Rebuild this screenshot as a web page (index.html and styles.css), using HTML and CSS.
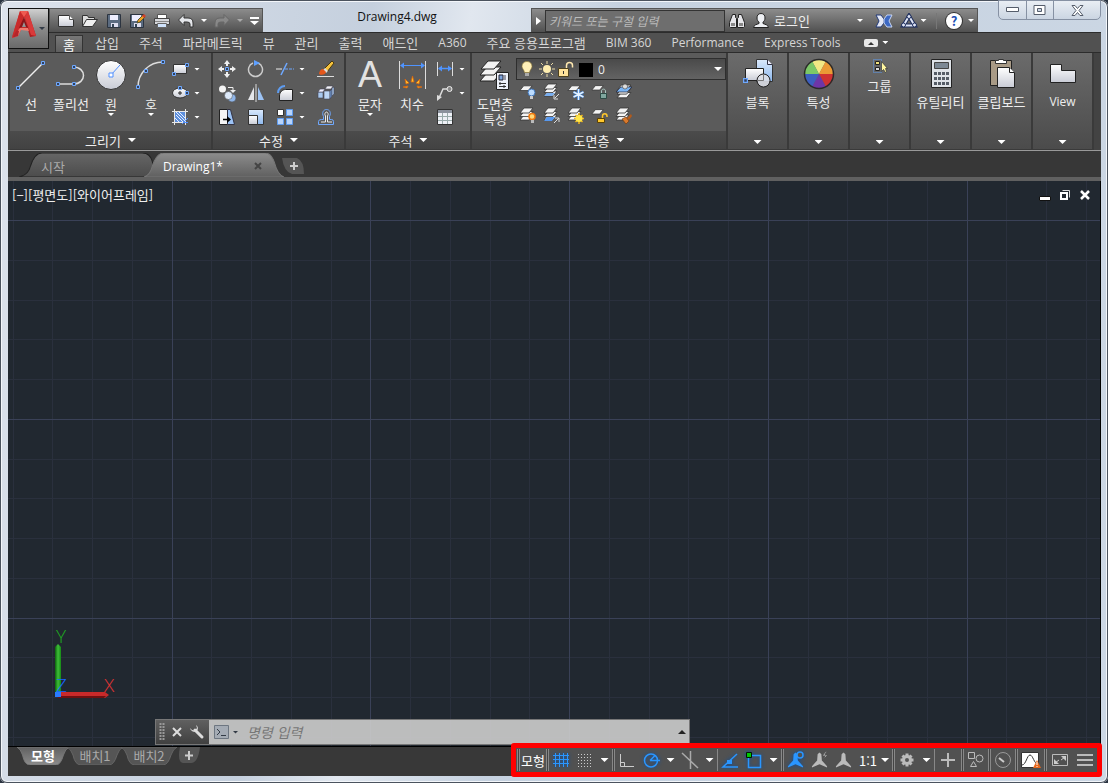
FILE: index.html
```html
<!DOCTYPE html>
<html lang="ko">
<head>
  <meta charset="UTF-8">
  <meta name="viewport" content="width=device-width, initial-scale=1">
  <title>Drawing4.dwg</title>
  <link rel="stylesheet" href="styles.css">
</head>
<body>

<!-- Shared gradients and symbols -->
<svg class="sprite" width="0" height="0" aria-hidden="true">
  <defs>
    <linearGradient id="gWhite" x1="0" y1="0" x2="0" y2="1"><stop offset="0" stop-color="#fff"/><stop offset="1" stop-color="#c9ccd6"/></linearGradient>
    <linearGradient id="gBlue" x1="0" y1="0" x2="0" y2="1"><stop offset="0" stop-color="#dbe9fb"/><stop offset="1" stop-color="#8db8ee"/></linearGradient>
    <linearGradient id="gRed" x1="0" y1="0" x2="1" y2="1"><stop offset="0" stop-color="#e8433b"/><stop offset="1" stop-color="#a3151a"/></linearGradient>
    <linearGradient id="gTab" x1="0" y1="0" x2="0" y2="1"><stop offset="0" stop-color="#666"/><stop offset="1" stop-color="#4c4c4c"/></linearGradient>
    <linearGradient id="gTabOn" x1="0" y1="0" x2="0" y2="1"><stop offset="0" stop-color="#8c8c8c"/><stop offset="1" stop-color="#606060"/></linearGradient>
    <linearGradient id="gLayOn" x1="0" y1="0" x2="0" y2="1"><stop offset="0" stop-color="#606060"/><stop offset="1" stop-color="#8c8c8c"/></linearGradient>
    <linearGradient id="gGreen" x1="0" y1="0" x2="1" y2="0"><stop offset="0" stop-color="#0a640a"/><stop offset=".5" stop-color="#3fbe3a"/><stop offset="1" stop-color="#158a15"/></linearGradient>
  </defs>
  <symbol id="stack" viewBox="0 0 16 16">
    <g fill="#f4f4f4" stroke="#333" stroke-width=".8"><path d="M5 8h9l-4 5H1z"/><path d="M5 4.500h9l-4 5H1z"/><path d="M5 1h9l-4 5H1z"/></g>
  </symbol>
  <symbol id="sheet" viewBox="0 0 16 16"><path d="M5 3h9l-4 5H1z" fill="#f4f4f4" stroke="#333" stroke-width=".8"/></symbol>
  <symbol id="anno" viewBox="0 0 18 18"><path d="M9 1 L11 3 L11.500 9.500 L17 15.500 V17 L9 13.500 L1 17 V15.500 L6.500 9.500 L7 3Z"/></symbol>
  <symbol id="node" viewBox="0 0 4 4"><path d="M.5.5h3v3h-3z" fill="#33415a" stroke="#6ea8ff"/></symbol>
</svg>

<div class="window">

  <!-- Title bar -->
  <header class="titlebar">
    <button class="app-menu" aria-label="Application menu">
      <svg width="25" height="28" viewBox="0 0 25 28">
        <path fill-rule="evenodd" d="M8 0h8l8 25-6 1-2-7H9l-3 6-6 2zM12 6l-3 10h6z" fill="url(#gRed)"/>
        <path d="M8 0l4 6-3 10-9 10z" fill="#c92b2b"/>
        <path d="M12 6l-5 11 3-1 2-5 2 5 2 1z" fill="#8a1519"/>
        <path d="M0 27l8-10h8l1 3-8-1-3 6z" fill="#ee7a6e"/>
        <path d="M0 27l5-8 2 1-1 5z" fill="#b5242a"/>
        <path d="M16 0l8 25-5-1-4-12-2-6z" fill="#d93a3a"/>
        <path d="M8 0h8l-4 6z" fill="#ef5b52"/>
      </svg>
      <i class="caret dark"></i>
    </button>

    <div class="quick">
      <button aria-label="새로 만들기"><svg width="18" height="16"><path d="M1.500 2.500h11l4 4v7h-15z" fill="url(#gWhite)" stroke="#333"/><path d="M12.500 2.500v4h4" fill="#fff" stroke="#555"/></svg></button>
      <button aria-label="열기"><svg width="18" height="16"><path d="M1.500 13.500v-11h5l1 2h6v3" fill="#ddd" stroke="#333"/><path d="M1.500 13.500l4-7h11l-5 7z" fill="#efefef" stroke="#333"/></svg></button>
      <button aria-label="저장"><svg width="18" height="16"><path d="M2.500 1.500h13v13h-13z" fill="#5b6b80" stroke="#2c3440"/><path d="M5 2h8v5H5z" fill="#eef"/><path d="M6 10h7v4H6z" fill="#dde"/><path d="M7 11h2v3H7z" fill="#345"/></svg></button>
      <button aria-label="다른 이름으로 저장"><svg width="18" height="16"><path d="M1.500 1.500h13v13h-13z" fill="#5b6b80" stroke="#2c3440"/><path d="M3 2h9v6H3z" fill="#eef"/><path d="M5 10h7v4H5z" fill="#dde"/><path d="M6 11h2v3H6z" fill="#345"/><path d="M8 10l1-3 5-5 2 2-5 5z" fill="#f0a020" stroke="#553"/><path d="M13 3l2-2 2 2-2 2z" fill="#d0402a"/></svg></button>
      <button aria-label="플롯"><svg width="18" height="16"><path d="M4.500 1.500h9v5h-9z" fill="#fff" stroke="#555"/><path d="M1.500 5.500h15v6h-15z" fill="#d6d8dc" stroke="#444"/><path d="M2 8h14v1H2z" fill="#888"/><path d="M4.500 10.500h9v4h-9z" fill="#cfe2fb" stroke="#666"/></svg></button>
      <button aria-label="명령 취소"><svg width="18" height="16"><path d="M1.500 7L7 1.500v3.500h4q5 0 5 5v4h-3v-3q0-2-3-2H7v3.500z" fill="#e4e6ea" stroke="#333"/></svg></button>
      <i class="caret"></i>
      <button aria-label="명령 복구"><svg width="18" height="16"><path d="M16.500 7L11 1.500v3.500H7q-5 0-5 5v4h3v-3q0-2 3-2h3v3.500z" fill="#888" stroke="#666"/></svg></button>
      <i class="caret dim"></i>
      <button class="narrow" aria-label="사용자화"><svg width="9" height="10"><path d="M0 1h9v2H0zM0 5h9L4.500 9z" fill="#fff"/></svg></button>
    </div>

    <div class="doc-title latin">Drawing4.dwg</div>

    <div class="info">
      <button class="info-toggle" aria-label="검색 접기"><svg width="5" height="8"><path d="M0 0l5 4-5 4z" fill="#fff"/></svg></button>
      <input class="search" type="text" aria-label="검색" placeholder="키워드 또는 구절 입력">
      <button aria-label="찾기"><svg width="18" height="18"><g fill="#e6e6ea" stroke="#222"><path d="M4.500 2.500h3v3l1 1v9h-6l-1-1v-4z"/><path d="M10.500 2.500h3l3 8v4l-1 1h-6v-9l1-1z"/></g><path d="M3 11h4v3H3zM11 11h4v3h-4z" fill="#888"/></svg></button>
      <button class="login"><svg width="18" height="18"><path d="M9 1.500c3 0 4 2 4 4.500 0 2-1 3.500-2 4v1.500c2 1 5 1 5.500 4h-15C2 12.500 5 12.500 7 11.500V10C6 9.500 5 8 5 6c0-2.500 1-4.500 4-4.500z" fill="#eef0f4" stroke="#222"/></svg><span>로그인</span><i class="caret"></i></button>
      <button aria-label="Exchange"><svg width="18" height="16"><path d="M1 2h5l3 4v4l-3 4H1l3-6z" fill="#e4e8f4" stroke="#223a7a"/><path d="M17 2h-5L9 6v4l3 4h5l-3-6z" fill="#3d69c4" stroke="#c8d6f4"/></svg></button>
      <button class="a360" aria-label="A360"><svg width="18" height="16"><path d="M9 3L3.500 12.500h11z" fill="none" stroke="#1d2d5c" stroke-width="4"/><path d="M9 3L3.500 12.500h11z" fill="none" stroke="#dfe5f5" stroke-width="2"/><g fill="#dfe5f5" stroke="#1d2d5c"><circle cx="9" cy="3.500" r="2"/><circle cx="3.500" cy="12" r="2"/><circle cx="14.500" cy="12" r="2"/></g></svg><i class="caret"></i></button>
      <i class="info-sep"></i>
      <button class="help" aria-label="도움말"><span>?</span><i class="caret"></i></button>
    </div>

    <div class="win-buttons">
      <button aria-label="최소화"><svg width="13" height="6"><path d="M.5.500h12v4H.5z" fill="#fff" stroke="#555d6b"/></svg></button>
      <button aria-label="최대화"><svg width="13" height="10"><path d="M1 .500h11v9H1z" fill="#fff" stroke="#555d6b"/><path d="M4.500 3.500h4v3h-4z" fill="#ccd6e4" stroke="#555d6b"/></svg></button>
      <button class="close" aria-label="닫기"><svg width="13" height="11"><path d="M1 .500h3l2.500 3 2.500-3h3l-4 5 4 5H9l-2.500-3-2.500 3H1l4-5z" fill="#fff" stroke="#555d6b"/></svg></button>
    </div>
  </header>

  <!-- Ribbon tabs -->
  <nav class="ribbon-tabs">
    <button class="active">홈</button>
    <button>삽입</button>
    <button>주석</button>
    <button>파라메트릭</button>
    <button>뷰</button>
    <button>관리</button>
    <button>출력</button>
    <button>애드인</button>
    <button class="latin">A360</button>
    <button>주요 응용프로그램</button>
    <button class="latin">BIM 360</button>
    <button class="latin">Performance</button>
    <button class="latin">Express Tools</button>
    <button class="ribbon-min" aria-label="리본 최소화"><svg width="14" height="8"><rect width="14" height="8" rx="2" fill="#e8e8e8"/><path d="M4 6l3-3 3 3z" fill="#333"/></svg><i class="caret"></i></button>
  </nav>

  <!-- Ribbon panels -->
  <section class="ribbon">
    <div class="panel">
      <div class="panel-body draw">
        <button class="tool">
          <svg width="32" height="32"><path d="M4 28L28 4" stroke="#eee" stroke-width="1.500"/><use href="#node" x="1" y="27" width="4" height="4"/><use href="#node" x="26" y="2" width="4" height="4"/></svg>
          <span>선</span>
        </button>
        <button class="tool">
          <svg width="32" height="32"><path d="M4 25h14c14 0 14-17 0-17" fill="none" stroke="#ddd" stroke-width="1.500"/><use href="#node" x="1" y="23" width="4" height="4"/><use href="#node" x="17" y="23" width="4" height="4"/><use href="#node" x="17" y="6" width="4" height="4"/></svg>
          <span>폴리선</span>
        </button>
        <button class="tool">
          <svg width="32" height="32"><circle cx="16" cy="16" r="14.500" fill="url(#gWhite)" stroke="#333"/><path d="M16 16L25 6" stroke="#4f8fff"/><path d="M14 14h4v4h-4z" fill="#fff" stroke="#4f8fff"/></svg>
          <span>원</span><i class="caret"></i>
        </button>
        <button class="tool">
          <svg width="32" height="32"><path d="M3 28C3 14 14 3 28 3" fill="none" stroke="#ddd" stroke-width="1.500"/><use href="#node" x="1" y="26" width="4" height="4"/><use href="#node" x="9" y="10" width="4" height="4"/><use href="#node" x="26" y="1" width="4" height="4"/></svg>
          <span>호</span><i class="caret"></i>
        </button>
        <div class="small-tools one">
          <button aria-label="직사각형"><svg width="18" height="18"><path d="M2.500 4.500h13v9h-13z" fill="url(#gWhite)" stroke="#333"/><use href="#node" x="1" y="12" width="4" height="4"/><use href="#node" x="14" y="3" width="4" height="4"/></svg><i class="caret"></i></button>
          <button aria-label="타원"><svg width="18" height="18"><ellipse cx="9" cy="9" rx="7.500" ry="5" fill="url(#gWhite)" stroke="#333"/><path d="M7 9h4M9 7v4" stroke="#222"/><use href="#node" x="7" y="2" width="4" height="4"/><use href="#node" x="14" y="7" width="4" height="4"/></svg><i class="caret"></i></button>
          <button aria-label="해치"><svg width="18" height="18"><path d="M4 4h10v10H4z" fill="#5d8fdd"/><path d="M5 7l7 7M5 4l9 9M8 4l6 6M4 10l4 4" stroke="#e6efff"/><path d="M1 3.500h16M1 14.500h16M3.500 1v16M14.500 1v16" stroke="#e8e8e8"/><path d="M11 16l6-6M12 14.500h5" stroke="#4f8fff"/></svg><i class="caret"></i></button>
        </div>
      </div>
      <button class="panel-title">그리기<i class="caret big"></i></button>
    </div>

    <div class="panel">
      <div class="panel-body">
        <div class="small-tools four">
          <button aria-label="이동"><svg width="18" height="18"><path d="M9 0l3 4h-2v2H8V4H6zM9 18l3-4h-2v-2H8v2H6zM0 9l4-3v2h2v2H4v2zM18 9l-4-3v2h-2v2h2v2z" fill="#f0f0f0"/><use href="#node" x="7" y="7" width="4" height="4"/></svg></button>
          <button aria-label="회전"><svg width="18" height="18"><path d="M11 3a7 7 0 1 1-5 0" fill="none" stroke="#ccc" stroke-width="1.500"/><path d="M7 0l6 3-6 3z" fill="#5ea0ff"/></svg></button>
          <button aria-label="자르기"><svg width="18" height="18"><path d="M0 9h6" stroke="#eee"/><path d="M5 15l6-12" stroke="#6ea8ff" stroke-width="1.500"/><path d="M9 9h9" stroke="#6ea8ff" stroke-dasharray="3 1"/></svg><i class="caret"></i></button>
          <button aria-label="지우기"><svg width="18" height="18"><path d="M7 9l8-8 2 2-7 9z" fill="#f6c23c" stroke="#4a3a10"/><path d="M6 10l2-2 3 3-2 2z" fill="#ddd"/><path d="M2 14c0-3 2-5 4-5l3 3c0 2-4 4-7 2z" fill="#e4571b"/><path d="M0 16.500h17" stroke="#ddd"/></svg></button>

          <button aria-label="복사"><svg width="18" height="18"><circle cx="4.500" cy="5" r="3.500" fill="#f4f4f4"/><circle cx="14" cy="14" r="4" fill="#8fb5e8" stroke="#444" stroke-width=".5"/><circle cx="10.500" cy="11.500" r="4" fill="#dce8f8" stroke="#444" stroke-width=".5"/><path d="M10 3.500h5v3" fill="none" stroke="#eee"/><path d="M12 6h6l-3 3z" fill="#eee"/></svg></button>
          <button aria-label="대칭"><svg width="18" height="18"><path d="M7 3v13H1z" fill="#e4e6ea"/><path d="M11 3v13h6z" fill="#9cc3f5"/><path d="M9 0v18" stroke="#ddd"/></svg></button>
          <button aria-label="모깎기"><svg width="18" height="18"><path d="M3.500 16.500V12c0-4 3-6.500 6-6.500h7v11z" fill="url(#gWhite)" stroke="#222"/><path d="M2 9c0-4 3-7 7-7" fill="none" stroke="#5e9cf0" stroke-width="2"/></svg><i class="caret"></i></button>
          <button aria-label="분해"><svg width="18" height="18"><g stroke="#445" stroke-width=".6"><path d="M1 8h5v6H1z" fill="#a8c8ee"/><path d="M1 8l2-3h5L6 8z" fill="#eef"/><path d="M7 7h6v8H7z" fill="#bdd6f5"/><path d="M13 7l2-2v7l-2 3z" fill="#6f9bd6"/><path d="M8 5l2-3h6l-2 3z" fill="#f4f4f8"/><path d="M15 4l2-1v7l-2 2z" fill="#a8c8ee"/></g></svg></button>

          <button aria-label="신축"><svg width="18" height="18"><path d="M1.500 1.500h8v15h-8z" fill="#f4f4f4" stroke="#222"/><path d="M9.500 1.500h3l4 15h-7z" fill="#9cc3f5" stroke="#334"/><path d="M5 11.500h6" stroke="#000" stroke-width="1.500"/><path d="M9 8l4 3.500L9 15z"/></svg></button>
          <button aria-label="축척"><svg width="18" height="18"><path d="M1.500 1.500h15v15h-15z" fill="url(#gBlue)" stroke="#333"/><path d="M1.500 7.500h9v9h-9z" fill="url(#gWhite)" stroke="#333"/></svg></button>
          <button aria-label="배열"><svg width="18" height="18"><path d="M1.500 1.500h6v6h-6z" fill="#fff" stroke="#333"/><g fill="#b9d4fa" stroke="#5e9cf0"><path d="M10.500 1.500h6v6h-6zM1.500 10.500h6v6h-6zM10.500 10.500h6v6h-6z"/></g></svg><i class="caret"></i></button>
          <button aria-label="간격띄우기"><svg width="18" height="18"><path d="M1.500 16.500v-3q0-2 3-2h2v-3c-2-4 0-7 3-7s5 3 3 7v3h2q2 0 2 2v3z" fill="none" stroke="#6ea8ff"/><path d="M4 14h4.500v-6c-1.500-2 0-4 1-4s2.500 2 1 4v6H15" fill="none" stroke="#e8e8e8"/></svg></button>
        </div>
      </div>
      <button class="panel-title">수정<i class="caret big"></i></button>
    </div>

    <div class="panel">
      <div class="panel-body note">
        <button class="tool">
          <b class="big-a">A</b>
          <span>문자</span><i class="caret"></i>
        </button>
        <button class="tool">
          <svg width="32" height="32"><path d="M3.500 2v28M29.500 2v28" stroke="#ddd"/><path d="M5 6.500h23" stroke="#4f94ff"/><path d="M4 6.500l4-3v6zM29 6.500l-4-3v6z" fill="#4f94ff"/><g fill="#ffc52e" stroke="#d9640c" stroke-width=".8"><path d="M15 23l1.500-6 1.500 6z"/><path d="M13 24l-4-4 1 5z"/><path d="M20 24l4-4-1 5z"/><path d="M12 27l-5 1 4 1z"/><path d="M21 27l5 1-4 1z"/></g></svg>
          <span>치수</span>
        </button>
        <div class="small-tools one">
          <button aria-label="선형"><svg width="18" height="18"><path d="M1.500 2v14M16.500 2v14" stroke="#ddd"/><path d="M3 8.500h12" stroke="#4f94ff" stroke-width="1.500"/><path d="M2 8.500l4-3v6zM16 8.500l-4-3v6z" fill="#4f94ff"/></svg><i class="caret"></i></button>
          <button aria-label="지시선"><svg width="18" height="18"><path d="M3 14l4-9h5" fill="none" stroke="#ddd" stroke-width="1.500"/><path d="M1 17l0-6 5 2z" fill="#ddd"/><circle cx="13.500" cy="5" r="2.500" fill="#888" stroke="#eee"/></svg><i class="caret"></i></button>
          <button aria-label="테이블"><svg width="18" height="18"><path d="M1.500 1.500h15v15h-15z" fill="#eef0f6" stroke="#333"/><path d="M2 2h14v3H2z" fill="#8b919c"/><path d="M2 8.500h14M2 12.500h14M6.500 5v11M11.500 5v11" stroke="#9aa"/></svg></button>
        </div>
      </div>
      <button class="panel-title">주석<i class="caret big"></i></button>
    </div>

    <div class="panel">
      <div class="panel-body layers">
        <button class="tool">
          <svg width="32" height="32"><g fill="#f2f2f2" stroke="#222"><path d="M8 14h14l-7 8H1z"/><path d="M8 8h14l-7 8H1z"/><path d="M9 2h13l-7 8H2z"/></g><path d="M17.500 13.500h12v17h-12z" fill="#eef2fa" stroke="#222"/><path d="M20 16h4v5h-4z" fill="#7da4dc" stroke="#223"/><path d="M26 16v5" stroke="#445"/><path d="M20 24.500h7M20 27.500h7" stroke="#333"/><path d="M21 23v3M25 26v3" stroke="#333"/></svg>
          <span>도면층<br>특성</span>
        </button>
        <div class="layer-tools">
          <label class="layer-box">
            <svg width="80" height="18" aria-hidden="true">
              <path d="M9 1.500c3 0 5 2 5 5 0 2-2 3-2.500 6h-5C6 9.500 4 8.500 4 6.500c0-3 2-5 5-5z" fill="#fff0b8" stroke="#8a7430" stroke-width=".6"/><path d="M7 13h4v3H7z" fill="#aaa"/>
              <circle cx="29" cy="9" r="4" fill="#ffeeb0"/><path d="M29 1v3M29 14v3M21 9h3M34 9h3M23 3l2 2M33 13l2 2M23 15l2-2M33 5l2-2" stroke="#eadba6"/>
              <path d="M40.500 8.500h10v8h-10z" fill="#ffe39b" stroke="#4d411e"/><path d="M45.500 11v3" stroke="#333"/><path d="M48.500 8V5.500c0-4 6-4 6 0v2" fill="none" stroke="#ffe9b0" stroke-width="1.500"/>
              <path d="M61 3h14v14H61z" fill="#000"/>
            </svg>
            <select class="latin" aria-label="도면층"><option>0</option></select>
            <i class="caret big"></i>
          </label>
          <div class="layer-icons">
            <button aria-label="끄기"><svg width="18" height="18"><use href="#sheet" width="15" height="15"/><circle cx="12.500" cy="9.500" r="3.500" fill="#bcdcff" stroke="#3f76bc"/><path d="M11 13h3v3h-3z" fill="#ccc"/></svg></button>
            <button aria-label="분리"><svg width="18" height="18"><use href="#stack" width="16" height="16"/><path d="M4 10h8l-3 3H1z" fill="#78aef0"/><path d="M16 11l-4 4M11 12v4h4" fill="none" stroke="#ddd"/></svg></button>
            <button aria-label="동결"><svg width="18" height="18"><use href="#sheet" width="15" height="15"/><path d="M11.500 6v11M6.500 9l10 5M6.500 14l10-5" stroke="#3a78c8" stroke-width="3"/><path d="M11.500 6v11M6.500 9l10 5M6.500 14l10-5" stroke="#e6f3ff" stroke-width="1.500"/></svg></button>
            <button aria-label="잠금"><svg width="18" height="18"><use href="#sheet" width="14" height="14"/><path d="M9.500 10.500h6v5h-6z" fill="#7fa69e" stroke="#2c4a44"/><path d="M10.500 10V8c0-2.500 4-2.500 4 0v2" fill="none" stroke="#a9c4be"/></svg></button>
            <button aria-label="현재로 설정"><svg width="18" height="18"><use href="#stack" y="1" x="1" width="17" height="17"/><path d="M6 4h11l-5 5H1z" fill="#79b4f4" stroke="#223" stroke-width=".7"/><circle cx="10" cy="3.500" r="2.500" fill="#ddd" stroke="#444" stroke-width=".6"/></svg></button>
            <button aria-label="모든 도면층 켜기"><svg width="18" height="18"><use href="#stack" width="16" height="16"/><circle cx="13" cy="9.500" r="3" fill="#ffd978" stroke="#ef7a12" stroke-width="1.500"/><path d="M12 13h3v3h-3z" fill="#bbb"/></svg></button>
            <button aria-label="분리 해제"><svg width="18" height="18"><use href="#stack" width="16" height="16"/><path d="M4 10h8l-3 4H1z" fill="#5798ee"/><path d="M11 16l5-5M12 11h4v4" fill="none" stroke="#ddd"/></svg></button>
            <button aria-label="동결 해제"><svg width="18" height="18"><use href="#stack" width="16" height="16"/><path d="M12 6v11M7 11.500h10M8.500 8l7 7M15.500 8l-7 7" stroke="#f0b41c" stroke-width="1.500"/><circle cx="12" cy="11.500" r="3.500" fill="#ffe748"/></svg></button>
            <button aria-label="잠금 해제"><svg width="18" height="18"><use href="#sheet" width="14" height="14"/><path d="M6.500 11.500h7v4h-7z" fill="#ffc72c" stroke="#5a4205"/><path d="M11.500 11V9c0-3 4.500-3 4.500 0v1" fill="none" stroke="#ffc72c" stroke-width="1.500"/></svg></button>
            <button aria-label="일치"><svg width="18" height="18"><use href="#stack" width="16" height="16"/><path d="M7 12l4-2 3 4-3 3z" fill="#d97a2c" stroke="#6b3208" stroke-width=".6"/><path d="M12 11l4-4 1 2-3 4z" fill="#b35a1a"/></svg></button>
          </div>
        </div>
      </div>
      <button class="panel-title">도면층<i class="caret big"></i></button>
    </div>

    <button class="panel collapsed">
      <svg width="32" height="32"><path d="M14.500 1.500h11l5 5v17h-16z" fill="url(#gBlue)" stroke="#333"/><path d="M25.500 1.500v5h5" fill="#eef" stroke="#334"/><path d="M3.500 10.500h18v12h-18z" fill="url(#gWhite)" stroke="#222"/><circle cx="21.500" cy="22.500" r="6.500" fill="#dcdee6" fill-opacity=".9" stroke="#222"/><path d="M15 22.500h6.500V16" fill="none" stroke="#777"/><use href="#node" x="1" y="20" width="5" height="5"/></svg>
      <span>블록</span><i class="caret big"></i>
    </button>
    <button class="panel collapsed">
      <svg width="32" height="32" viewBox="-16 -16 32 32"><path d="M0 0L-7-13A15 15 0 0 1 7-13z" fill="#f3e884"/><path d="M0 0L7-13A15 15 0 0 1 15 0z" fill="#eb9a35"/><path d="M0 0H15A15 15 0 0 1 7 13z" fill="#cf3232"/><path d="M0 0L7 13A15 15 0 0 1-7 13z" fill="#6e35a8"/><path d="M0 0L-7 13A15 15 0 0 1-15 0z" fill="#3c5fc0"/><path d="M0 0H-15A15 15 0 0 1-7-13z" fill="#7cc767"/><circle r="14.500" fill="none" stroke="#2a2a2a" stroke-width="1.500"/></svg>
      <span>특성</span><i class="caret big"></i>
    </button>
    <button class="panel collapsed">
      <svg width="18" height="16"><path d="M2.500 1.500h8v13h-8z" fill="none" stroke="#5e9cf0" stroke-dasharray="1 1"/><path d="M4.500 3.500h4v3h-4z" fill="#f3e27a" stroke="#222"/><path d="M4.500 9.500h4v3h-4z" fill="#ddd" stroke="#222"/><path d="M10.500 3.500v10l2-2 2 3 1-1-1-3h2z" fill="#fff6a0" stroke="#333" stroke-width=".7"/></svg>
      <span>그룹</span><i class="caret big"></i>
    </button>
    <button class="panel collapsed">
      <svg width="32" height="32"><path d="M6.500 1.500h20v28h-20z" fill="#dfe3e8" stroke="#222"/><path d="M9.500 4.500h14v6h-14z" fill="#7c8894" stroke="#444"/><g fill="#555c66"><path d="M9 14h3v3H9zM13 14h3v3h-3zM17 14h3v3h-3zM21 14h3v3h-3zM9 19h3v3H9zM13 19h3v3h-3zM17 19h3v3h-3zM21 19h3v3h-3zM9 24h3v3H9zM13 24h3v3h-3zM17 24h3v3h-3zM21 24h3v3h-3z"/></g></svg>
      <span>유틸리티</span><i class="caret big"></i>
    </button>
    <button class="panel collapsed">
      <svg width="32" height="32"><path d="M4.500 2.500h21v25h-21z" fill="#a89a86" stroke="#222"/><path d="M9.500 2.500h3v-1h5v1h3v3h-11z" fill="#fff" stroke="#333"/><path d="M11.500 9.500h12l5 5v15h-17z" fill="url(#gWhite)" stroke="#222"/><path d="M23.500 9.500v5h5" fill="#fff" stroke="#222"/></svg>
      <span>클립보드</span><i class="caret big"></i>
    </button>
    <button class="panel collapsed latin">
      <svg width="32" height="32"><path d="M3.500 6.500h11v6h14v12h-25z" fill="url(#gWhite)" stroke="#222"/></svg>
      <span>View</span><i class="caret big"></i>
    </button>
  </section>

  <!-- Open files -->
  <nav class="file-tabs">
    <button class="file-tab">
      <svg class="shape" viewBox="0 0 134 24" preserveAspectRatio="none"><path d="M0 24Q9 22 11 13Q15 0 22 0H118Q126 0 128 10Q130 22 134 24z" fill="url(#gTab)" stroke="#222"/></svg>
      <span>시작</span>
    </button>
    <button class="file-tab active latin">
      <svg class="shape" viewBox="0 0 134 24" preserveAspectRatio="none"><path d="M0 24Q6 22 8 13Q12 0 19 0H116Q122 0 125 10Q128 22 134 24z" fill="url(#gTabOn)" stroke="#777"/></svg>
      <span>Drawing1*</span>
      <svg class="tab-close" width="8" height="8"><path d="M1 1l6 6M7 1L1 7" stroke="#444" stroke-width="2"/></svg>
    </button>
    <button class="add-tab" aria-label="새 도면"><svg width="24" height="16"><path d="M0 0h15q7 3 7 16H10Q2 14 0 0z" fill="#555"/><path d="M12 4v8M8 8h8" stroke="#ccc" stroke-width="2"/></svg></button>
  </nav>

  <!-- Drawing area -->
  <main class="drawing">
    <svg class="grid" id="grid" width="100%" height="100%" aria-hidden="true"></svg>
    <div class="view-label">[−][평면도][와이어프레임]</div>
    <div class="view-buttons">
      <button aria-label="뷰 최소화"><svg width="12" height="12"><path d="M.5 7.500h11v4H.5z" fill="#fff" stroke="#111"/></svg></button>
      <button aria-label="뷰 복원"><svg width="12" height="12"><path d="M3.500 1.500h7v7" fill="none" stroke="#ddd"/><path d="M2 4h6v6H2z" fill="none" stroke="#fff" stroke-width="2"/></svg></button>
      <button aria-label="뷰 닫기"><svg width="12" height="12"><path d="M2 2l8 8M10 2l-8 8" stroke="#fff" stroke-width="2.500"/></svg></button>
    </div>

    <svg class="ucs" width="74" height="80" aria-hidden="true">
      <path d="M5 24l3-3 3 3v48H5z" fill="url(#gGreen)"/>
      <path d="M8 69h47l4 3-4 3H8z" fill="#c82a2a"/><path d="M8 73h48l-2 2H8z" fill="#6e1010"/>
      <path d="M5 69h6v5H5z" fill="#2a7bff"/>
      <g class="axis-name"><text x="6" y="20" fill="#1fae1f">Y</text><text x="54" y="69" fill="#e03434">X</text><text x="6" y="69" fill="#1666ff">Z</text></g>
    </svg>

    <div class="command">
      <div class="command-head">
        <svg width="6" height="18"><path d="M1.500 0v18M4.500 0v18" stroke="#999" stroke-width="2" stroke-dasharray="2 1"/></svg>
        <button aria-label="명령행 닫기"><svg width="10" height="10"><path d="M1 1l8 8M9 1L1 9" stroke="#ddd" stroke-width="2"/></svg></button>
        <button class="wrench" aria-label="사용자화"><svg width="16" height="16"><path d="M6 6l7 7" stroke="#ddd" stroke-width="3" stroke-linecap="round"/><path d="M1 4a4.500 4.500 0 0 0 7 3 4.500 4.500 0 0 0-1-6l1 3-2 2.500-3-.5z" fill="#ddd"/></svg></button>
      </div>
      <button class="prompt" aria-label="최근 명령"><svg width="15" height="14"><path d="M.5.500h14v13H.5z" fill="#a4abb4" stroke="#6d7681"/><path d="M3 4l3 3-3 3M7 10.500h5" fill="none" stroke="#333b46"/></svg><i class="caret dark"></i></button>
      <input type="text" aria-label="명령" placeholder="명령 입력">
      <button class="history" aria-label="명령 사용 내역"><svg width="8" height="4"><path d="M0 4l4-4 4 4z" fill="#222"/></svg></button>
    </div>
  </main>

  <!-- Layout tabs and status bar -->
  <footer class="bottom">
    <nav class="layout-tabs">
      <button class="active"><svg class="shape" viewBox="0 0 56 18" preserveAspectRatio="none"><path d="M0 0Q4 2 6 8Q8 18 14 18H42Q47 18 50 8Q52 2 56 0z" fill="url(#gLayOn)" stroke="#777"/></svg><span>모형</span></button>
      <button><svg class="shape" viewBox="0 0 56 18" preserveAspectRatio="none"><path d="M0 0Q4 2 6 8Q8 18 14 18H42Q47 18 50 8Q52 2 56 0z" fill="#555" stroke="#666"/></svg><span>배치1</span></button>
      <button><svg class="shape" viewBox="0 0 56 18" preserveAspectRatio="none"><path d="M0 0Q4 2 6 8Q8 18 14 18H42Q47 18 50 8Q52 2 56 0z" fill="#555" stroke="#666"/></svg><span>배치2</span></button>
      <button class="add-layout" aria-label="새 배치"><svg width="24" height="17"><path d="M3 0h20q-2 16-9 16H6Q0 15 3 0z" fill="#555"/><path d="M12 4v9M8 8.500h8" stroke="#ccc" stroke-width="2"/></svg></button>
    </nav>

    <div class="status">
      <i class="sep double"></i>
      <button class="model">모형</button>
      <i class="sep double"></i>
      <button class="on" aria-label="그리드"><svg width="18" height="18"><path d="M3.500 2v14M7.500 2v14M11.500 2v14M15.500 2v14M1 4.500h16M1 8.500h16M1 12.500h16" stroke="#2a96ff"/></svg></button>
      <button aria-label="스냅"><svg width="18" height="18"><path d="M2 3.500h14M2 6.500h14M2 9.500h14M2 12.500h14M2 15.500h14" stroke="#ccc" stroke-dasharray="1 2"/></svg></button>
      <button class="drop" aria-label="스냅 설정"><i class="caret big"></i></button>
      <i class="sep double"></i>
      <button aria-label="직교"><svg width="18" height="18"><path d="M2.500 3v12.500H16M2.500 11.500h4v4" fill="none" stroke="#ccc"/></svg></button>
      <button class="on" aria-label="극좌표 추적"><svg width="18" height="18"><circle cx="9" cy="9.500" r="6.500" fill="none" stroke="#2a96ff" stroke-width="1.500"/><path d="M8 9.500h10M8 9.500l5-5" fill="none" stroke="#2a96ff" stroke-width="1.500"/></svg></button>
      <button class="drop" aria-label="극좌표 설정"><i class="caret big"></i></button>
      <button aria-label="등각투영"><svg width="18" height="20"><path d="M1 3l16 15M9.500 1v18" stroke="#aaa" stroke-width="1.500"/></svg></button>
      <button class="drop" aria-label="등각투영 설정"><i class="caret big"></i></button>
      <i class="sep"></i>
      <button class="on" aria-label="객체 스냅 추적"><svg width="18" height="18"><path d="M16 3L2 16h15" fill="none" stroke="#2a96ff" stroke-width="1.500"/><path d="M6 9h5v4H6z" fill="#2a96ff"/></svg></button>
      <button class="on" aria-label="객체 스냅"><svg width="18" height="18"><path d="M3.500 4.500h12v12h-12z" fill="none" stroke="#2a96ff" stroke-width="1.500"/><path d="M1.500 1.500h5v5h-5z" fill="#00c800" stroke="#001800"/></svg></button>
      <button class="drop" aria-label="객체 스냅 설정"><i class="caret big"></i></button>
      <i class="sep double"></i>
      <button class="on" aria-label="주석 가시성"><svg width="18" height="18"><use href="#anno" width="17" height="18" fill="#2a96ff"/><circle cx="13" cy="4" r="3" fill="#515151" stroke="#2a96ff" stroke-width="1.500"/></svg></button>
      <button aria-label="자동 축척"><svg width="18" height="18"><use href="#anno" width="17" height="18" fill="#bbb"/><path d="M15 0l-4 5h3l-2 4 5-5h-3l2-4z" fill="#bbb" stroke="#515151"/></svg></button>
      <button aria-label="주석"><svg width="18" height="18"><use href="#anno" width="17" height="18" fill="#bbb"/></svg></button>
      <button class="scale">1:1<i class="caret big"></i></button>
      <i class="sep double"></i>
      <button aria-label="작업공간"><svg width="18" height="18"><circle cx="9" cy="9" r="5" fill="#bbb"/><path d="M9 2.500v13M2.500 9h13M4.500 4.500l9 9M13.500 4.500l-9 9" stroke="#bbb" stroke-width="3"/><circle cx="9" cy="9" r="2" fill="#555"/></svg></button>
      <button class="drop" aria-label="작업공간 설정"><i class="caret big"></i></button>
      <i class="sep"></i>
      <button class="wide" aria-label="주석 감시"><svg width="18" height="18"><path d="M9 2v14M2 9h14" stroke="#bbb" stroke-width="2"/></svg></button>
      <i class="sep double"></i>
      <button aria-label="객체 분리"><svg width="18" height="18"><g fill="none" stroke="#bbb"><path d="M1.500 1.500h6v6h-6z"/><circle cx="12.500" cy="7.500" r="3.500"/><path d="M6.500 10.500l3 5h-6z"/></g></svg></button>
      <i class="sep double"></i>
      <button aria-label="하드웨어 가속"><svg width="18" height="18"><circle cx="9" cy="9" r="7.500" fill="none" stroke="#999"/><path d="M5 7l5 4" stroke="#ccc" stroke-width="2"/></svg></button>
      <i class="sep double"></i>
      <button class="wide" aria-label="그래픽 성능"><svg width="20" height="18"><path d="M.5 1.500h17v15H.5z" fill="#fff" stroke="#333"/><path d="M1 14C5 14 6 4 9 4s4 9 8 9" fill="none" stroke="#333"/><path d="M16 9l4 8h-8z" fill="#e8681c"/><path d="M16 11v3M16 15v1" stroke="#fff"/></svg></button>
      <i class="sep double"></i>
      <button class="wide" aria-label="화면 정리"><svg width="18" height="18"><path d="M1.500 3.500h15v11h-15z" fill="none" stroke="#bbb"/><path d="M10 5h5v5zM3 8v5h5z" fill="#ccc"/><path d="M14 6l-4 3M4 12l4-3" stroke="#ccc"/></svg></button>
      <button aria-label="사용자화"><svg width="16" height="18"><path d="M0 4h16M0 9h16M0 14h16" stroke="#bbb" stroke-width="2"/></svg></button>
    </div>
  </footer>
</div>

<script>
  const grid = document.getElementById('grid');
  const step = 39.75;
  const originX = 163.5;
  const originY = 39;

  function addLine(x1, y1, x2, y2, major) {
    const line = document.createElementNS('http://www.w3.org/2000/svg', 'line');
    line.setAttribute('x1', x1);
    line.setAttribute('y1', y1);
    line.setAttribute('x2', x2);
    line.setAttribute('y2', y2);
    line.setAttribute('class', major ? 'major' : 'minor');
    grid.appendChild(line);
  }

  // every fifth line is a major one, so draw the minor ones first
  function drawGrid() {
    const box = grid.getBoundingClientRect();
    grid.innerHTML = '';
    [false, true].forEach(major => {
      for (let i = -4; originX + i * step < box.width; i++) {
        if ((i % 5 === 0) !== major) continue;
        const x = Math.round(originX + i * step) + 0.5;
        addLine(x, 0, x, box.height, major);
      }
      for (let i = 0; originY + i * step < box.height; i++) {
        if ((i % 5 === 0) !== major) continue;
        const y = Math.round(originY + i * step) + 0.5;
        addLine(0, y, box.width, y, major);
      }
    });
  }

  drawGrid();
  window.addEventListener('resize', drawGrid);
</script>

</body>
</html>
```
FILE: styles.css
```css
* {
  box-sizing: border-box;
}
body {
  margin: 0;
  background: #2a3340;
  font-family: "Noto Sans CJK KR", sans-serif;
  font-size: 13px;
  line-height: 15px;
  color: #eee;
}
button, input, select {
  margin: 0;
  padding: 0;
  border: none;
  background: none;
  color: inherit;
  font: inherit;
}
button {
  display: flex;
  flex: none;
  align-items: center;
  justify-content: center;
  white-space: nowrap;
}
svg {
  display: block;
  flex: none;
}
.sprite {
  position: absolute;
}
.latin {
  font-family: "Open Sans", "Noto Sans CJK KR", sans-serif;
  font-size: 12px;
}

/* small down arrows */
.caret {
  flex: none;
  width: 6px;
  height: 3px;
  background: #fff;
  clip-path: polygon(0 0, 100% 0, 50% 100%);
}
.caret.big {
  width: 8px;
  height: 4px;
}
.caret.dark {
  background: #333b46;
}
.caret.dim {
  background: #aaa;
}

/* window frame */
.window {
  display: flex;
  flex-direction: column;
  min-height: 100vh;
  padding: 8px 7px 7px 8px;
  border-radius: 7px;
  background: linear-gradient(100deg, #dde3ec 0, #c5d0de 30%, #e1e7ef 38%, #c6d2e0 50%, #ccd7e4 100%);
  box-shadow: inset 0 0 0 1px #4b535e, inset 0 0 0 2px #f3f6fa;
}

/* title bar */
.titlebar {
  position: relative;
  display: flex;
  height: 24px;
}
.app-menu {
  position: absolute;
  left: 0;
  top: 0;
  z-index: 2;
  width: 41px;
  height: 41px;
  gap: 2px;
  border: 1px solid #111;
  background: linear-gradient(#d0d0d0, #8a8a8a 50%, #6a6a6a);
}
.app-menu svg {
  align-self: flex-start;
  margin-top: 2px;
}
.quick, .info {
  display: flex;
  align-items: center;
  border: 1px solid #555;
  border-bottom: none;
  background: linear-gradient(#8c8c8c, #505050);
}
.quick {
  margin-left: 41px;
  padding-left: 4px;
}
.quick button {
  width: 24px;
  height: 22px;
}
.quick .caret {
  margin: 0 3px;
}
.quick button.narrow {
  width: 16px;
}
.doc-title {
  flex: 1;
  align-self: center;
  margin-bottom: 8px;
  text-align: center;
  color: #111;
}
.info {
  width: 447px;
  margin-right: 20px;
}
.info button {
  width: 24px;
  height: 22px;
}
.info button.info-toggle {
  width: 13px;
}
.search {
  width: 180px;
  height: 22px;
  padding: 0 3px;
  border: 1px solid #333;
  background: #6e6e6e;
  font-size: 12px;
  font-style: italic;
}
.search::placeholder {
  color: #bbb;
}
.info button.login {
  flex: 1;
  justify-content: flex-start;
  padding: 0 3px;
  gap: 4px;
}
.login .caret {
  margin-left: auto;
  margin-right: 6px;
}
.info button.a360 {
  width: 34px;
  gap: 3px;
}
.info-sep {
  width: 1px;
  height: 16px;
  margin: 0 6px;
  background: #777;
}
.info button.help {
  width: 34px;
  gap: 6px;
}
.help span {
  width: 16px;
  height: 16px;
  border-radius: 8px;
  background: #fff;
  box-shadow: 0 0 0 1px #333;
  color: #1c4fb4;
  font-weight: bold;
  line-height: 16px;
}
.win-buttons {
  display: flex;
  height: 20px;
  margin-top: -8px;
  width: 103px;
  border: 1px solid #8691a3;
  border-radius: 0 0 5px 5px;
  background: linear-gradient(#e9eef4, #cbd5e2);
}
.win-buttons button {
  flex: 1;
}
.win-buttons button + button {
  border-left: 1px solid #8691a3;
}
.win-buttons button.close {
  flex: none;
  width: 47px;
}

/* ribbon tabs */
.ribbon-tabs {
  display: flex;
  gap: 4px;
  height: 20px;
  padding-left: 47px;
  border-top: 1px solid #2c2c2c;
  background: #515151;
}
.ribbon-tabs button {
  padding: 0 8px;
  color: #d6d6d6;
}
.ribbon-tabs button.active {
  margin-top: 2px;
  border: 1px solid #333;
  border-bottom: none;
  padding: 0 7px;
  background: linear-gradient(#777, #5e5e5e);
  color: #fff;
}
.ribbon-tabs button.ribbon-min {
  gap: 4px;
  margin-left: 4px;
}

/* ribbon */
.ribbon {
  display: grid;
  grid-template-columns: 203px 133px 126px 256px repeat(6, 61px);
  height: 99px;
  padding-left: 2px;
  border-top: 1px solid #2c2c2c;
  border-bottom: 1px solid #999;
  background: #434343;
}
.panel {
  display: flex;
  flex-direction: column;
  border: solid #3a3a3a;
  border-width: 0 2px 1px 0;
  background: #5b5b5b;
}
.panel-body {
  display: flex;
  flex: 1;
}
.panel-body.draw {
  padding-left: 1px;
}
.panel-body.note {
  padding-left: 3px;
}
.panel-body.layers {
  padding-left: 2px;
}
.panel-title {
  height: 18px;
  gap: 7px;
  background: linear-gradient(#4b4b4b, #424242);
}
.tool {
  flex-direction: column;
  justify-content: flex-start;
  width: 40px;
  padding-top: 6px;
}
.tool svg, .big-a {
  margin-bottom: 5px;
}
.tool .caret {
  margin-top: 2px;
}
.big-a {
  height: 32px;
  font: 36px/32px "Liberation Sans", sans-serif;
  color: #e2e2e2;
}
.note .tool, .layers .tool {
  width: 42px;
}
.small-tools {
  display: grid;
  grid-auto-rows: 24px;
  padding-top: 4px;
}
.small-tools.one {
  grid-template-columns: 33px;
}
.note .small-tools {
  padding-left: 3px;
}
.small-tools.four {
  grid-template-columns: 29px 29px 41px 28px;
  padding-left: 5px;
}
.small-tools button {
  justify-content: flex-start;
  gap: 5px;
}
.layer-tools {
  flex: 1;
  padding: 5px 0 0;
}
.layer-box {
  display: flex;
  align-items: center;
  height: 22px;
  padding: 0 3px 0 1px;
  border: 1px solid #2e2e2e;
  background: linear-gradient(#4a4a4a, #636363);
}
.layer-box select {
  flex: 1;
  appearance: none;
}
.layer-icons {
  display: grid;
  grid-template-columns: repeat(5, 24px);
  grid-auto-rows: 24px;
}
.collapsed {
  justify-content: flex-start;
  padding: 5px 0;
  background: linear-gradient(#6b6b6b, #4b4b4b);
}
.collapsed svg {
  margin-bottom: 4px;
}
.collapsed .caret {
  margin-top: auto;
}

/* file tabs */
.file-tabs {
  display: flex;
  align-items: flex-end;
  height: 30px;
  padding-left: 11px;
  border-bottom: 4px solid #606060;
  background: #373737;
}
.file-tab {
  position: relative;
  width: 140px;
  height: 24px;
  padding: 2px 20px 0 22px;
  justify-content: space-between;
  color: #aaa;
}
.file-tab.active {
  margin-left: -15px;
  padding: 2px 22px 0 19px;
  color: #fff;
}
.file-tab span, .tab-close, .layout-tabs span {
  position: relative;
}
.shape {
  position: absolute;
  left: 0;
  top: 0;
  width: 100%;
  height: 100%;
}
.add-tab {
  margin: 0 0 3px -2px;
}

/* drawing area */
.drawing {
  position: relative;
  flex: 1;
  display: flex;
  justify-content: space-between;
  align-items: flex-start;
  padding: 6px 9px 0 4px;
  border-right: 1px solid #000;
  background: #212830;
}
.grid {
  position: absolute;
  left: 0;
  top: 0;
}
.grid .minor {
  stroke: #2a303d;
}
.grid .major {
  stroke: #3a4157;
}
.view-label, .view-buttons {
  position: relative;
}
.view-buttons {
  display: flex;
  gap: 8px;
  padding-top: 2px;
}
.ucs {
  position: absolute;
  left: 42px;
  bottom: 43px;
}
.axis-name {
  font: 300 19px "Open Sans", sans-serif;
}
.command {
  position: absolute;
  left: 147px;
  bottom: 1px;
  display: flex;
  width: 535px;
  height: 26px;
  border: 1px solid #777;
  background: rgba(205, 205, 205, 0.9);
}
.command-head {
  display: flex;
  align-items: center;
  gap: 7px;
  width: 53px;
  padding-left: 3px;
  background: linear-gradient(#606060, #404040);
}
.command input {
  flex: 1;
  padding-left: 4px;
  font-size: 14px;
  font-style: italic;
  color: #333;
}
.command input::placeholder {
  color: #777;
}
.prompt {
  width: 34px;
  gap: 4px;
}
.history {
  width: 14px;
}

/* bottom row */
.bottom {
  display: flex;
  justify-content: space-between;
  height: 30px;
  border-top: 1px solid #000;
  background: #383838;
}
.layout-tabs {
  display: flex;
  height: 18px;
  padding-left: 9px;
}
.layout-tabs button {
  position: relative;
  width: 56px;
  margin-left: -2px;
  padding-bottom: 2px;
  color: #aaa;
}
.layout-tabs button.active {
  width: 52px;
  margin-left: 0;
  color: #fff;
  font-weight: bold;
}
.layout-tabs button.add-layout {
  width: 24px;
  margin-left: 0;
}

/* status bar, outlined in red */
.status {
  position: relative;
  display: flex;
  align-items: center;
  height: 24px;
  margin: 1px 4px 0 0;
  padding-left: 1px;
  background: #515151;
}
.status::after {
  content: "";
  position: absolute;
  inset: -5px;
  border: 5px solid #f00;
  border-radius: 3px;
  pointer-events: none;
}
.status button {
  width: 24px;
  height: 22px;
}
.status button.on svg {
  filter: drop-shadow(0 0 2px #0a4ea0);
}
.status button.model {
  width: 26px;
  color: #fff;
}
.status button.drop {
  width: 15px;
}
.status button.scale {
  width: 36px;
  gap: 4px;
  color: #fff;
}
.status button.wide {
  width: 26px;
}
.sep {
  width: 1px;
  height: 22px;
  background: #888;
}
.sep.double {
  width: 3px;
  border: solid #888;
  border-width: 0 1px;
  background: #444;
}
```
